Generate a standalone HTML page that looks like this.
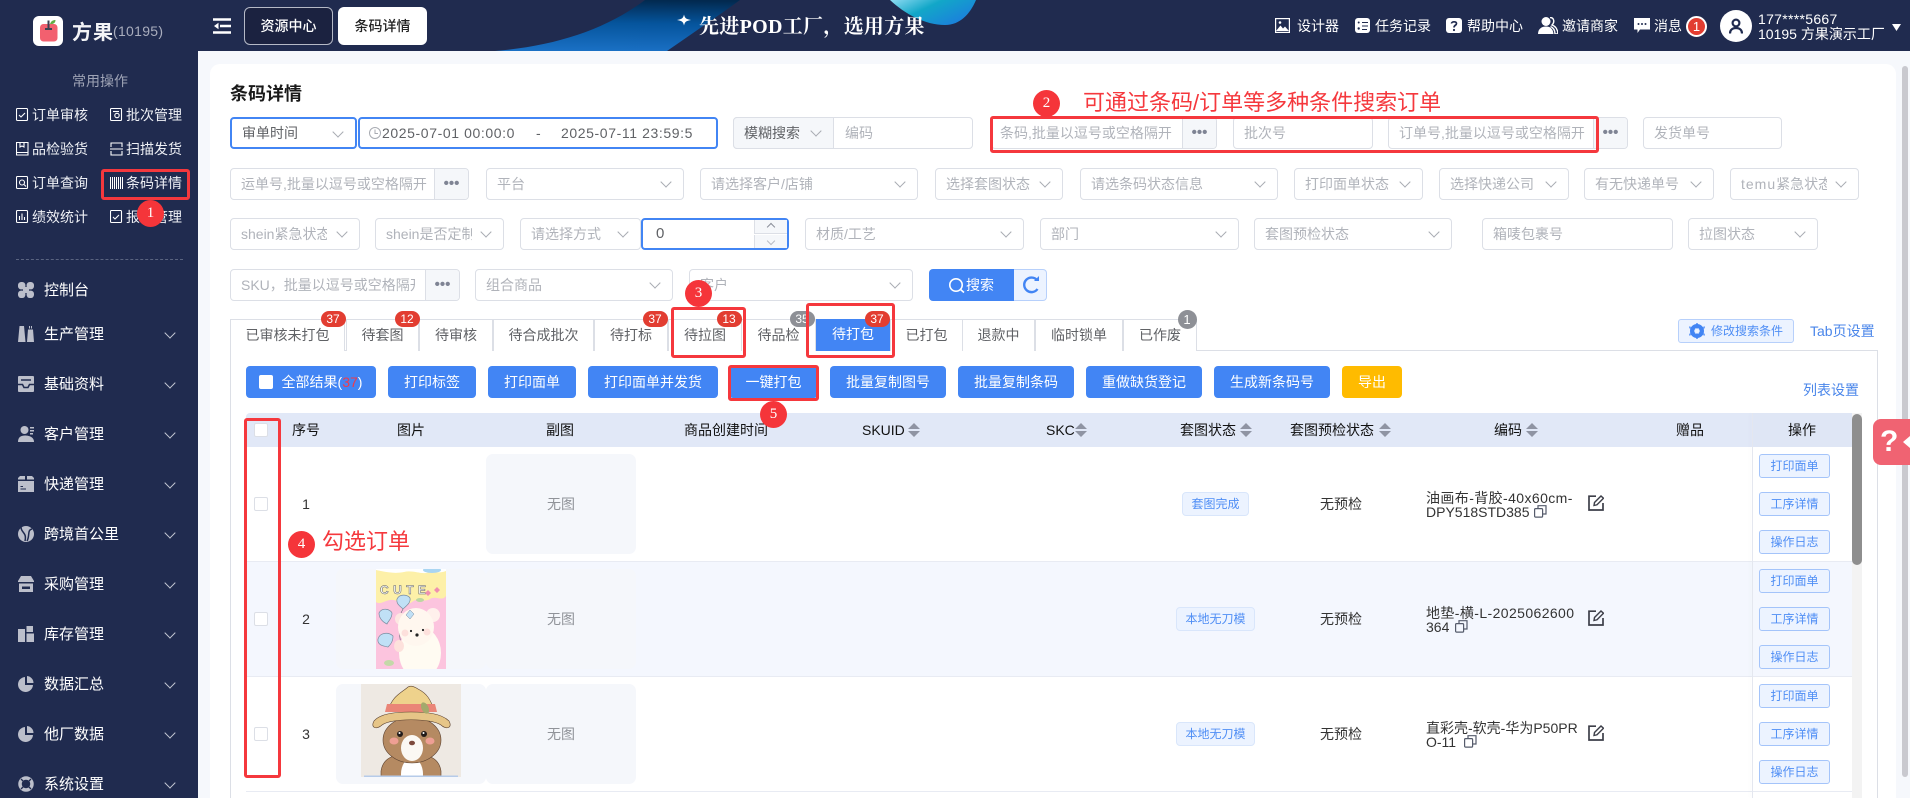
<!DOCTYPE html>
<html lang="zh"><head><meta charset="utf-8"><title>条码详情</title>
<style>
*{box-sizing:border-box}
html,body{margin:0;padding:0}
body{width:1910px;height:798px;overflow:hidden;position:relative;background:#f6f8fc;font:14px/20px "Liberation Sans","Noto Sans CJK SC",sans-serif;color:#333}
.a{position:absolute;white-space:nowrap}
.t{position:absolute;white-space:nowrap;height:20px;line-height:20px}
.c{transform:translateX(-50%)}
svg{position:absolute;display:block}
.i{position:absolute;height:32px;border:1px solid #dcdfe6;border-radius:4px;background:#fff;color:#b0b3ba;line-height:30px;padding-left:10px;white-space:nowrap;overflow:hidden}
.i.s:after{content:"";position:absolute;right:13px;top:9px;width:7px;height:7px;border-right:1px solid #a8abb2;border-bottom:1px solid #a8abb2;transform:rotate(45deg)}
.d{position:absolute;right:0;top:0;bottom:0;width:34px;background:#f5f7fa;border-left:1px solid #dcdfe6;color:#7f8494;font-size:15px;line-height:29px;text-align:center;font-weight:700;letter-spacing:0}
.tab{position:absolute;top:319px;height:32px;border:1px solid #dcdfe6;border-bottom:0;background:#fff;color:#606266;text-align:center;line-height:31px}
.b{position:absolute;top:311px;height:16px;width:25px;margin-left:-12.5px;border-radius:8px;background:#e23d31;color:#fff;font-size:12px;line-height:16px;text-align:center;z-index:3}
.btn{position:absolute;top:366px;height:32px;border-radius:4px;background:#4285f4;color:#fff;text-align:center;line-height:32px;white-space:nowrap}
.red{position:absolute;border:3px solid #f5383d;border-radius:3px;z-index:6}
.n{position:absolute;width:27px;height:27px;border-radius:50%;background:#f5353a;color:#fff;font:15px/27px "Liberation Serif","Noto Serif CJK SC",serif;text-align:center;z-index:7}
.ann{position:absolute;color:#f5383d;font-size:22px;line-height:30px;white-space:nowrap;z-index:7}
.side{position:absolute;color:#eef0f5;white-space:nowrap;height:20px;line-height:20px}
.m{position:absolute;left:44px;color:#fff;font-size:15px;height:22px;line-height:22px;white-space:nowrap}
.ch{position:absolute;left:166px;width:8px;height:8px;border-right:1.3px solid #c4c8d4;border-bottom:1.3px solid #c4c8d4;transform:rotate(45deg)}
.th{position:absolute;top:420px;height:20px;line-height:20px;color:#111;font-weight:400;white-space:nowrap}
.cb{position:absolute;left:254px;width:14px;height:14px;border:1px solid #dcdfe6;border-radius:2px;background:#fff}
.no{position:absolute;left:296px;width:20px;text-align:center;color:#333}
.cell{position:absolute;height:100px;background:#f5f7fb;border-radius:7px}
.sub{left:486px;width:150px;color:#909399;text-align:center;line-height:100px}
.tag{position:absolute;height:24px;background:#ecf3ff;border:1px solid #d9e6fb;border-radius:4px;color:#4f8ef5;font-size:12px;line-height:22px;text-align:center}
.op{position:absolute;left:1759px;width:71px;height:24px;background:#ecf3ff;border:1px solid #a4c4fa;border-radius:3px;color:#4f8ef5;font-size:12px;line-height:22px;text-align:center;z-index:2}
.code{position:absolute;left:1426px;line-height:14px;color:#333;white-space:nowrap}
.hl{stroke:#fff;stroke-width:1.1;fill:none}
</style></head><body>

<!-- header -->
<div class="a" style="left:0;top:0;width:1910px;height:51px;background:#202b4f"></div>
<svg style="left:480px;top:0" width="520" height="51" viewBox="0 0 520 51">
<defs>
<linearGradient id="g1" x1="0.55" y1="0" x2="0.5" y2="1"><stop offset="0" stop-color="#02294f"/><stop offset=".45" stop-color="#05549c"/><stop offset="1" stop-color="#1a70c4"/></linearGradient>
<linearGradient id="g2" x1="0" y1="0" x2="1" y2="0.6"><stop offset="0" stop-color="#8fdcf2"/><stop offset=".45" stop-color="#12a7c8"/><stop offset="1" stop-color="#1b80dc"/></linearGradient>
</defs>
<path d="M15 51C75 46 125 30 165 0L260 0C235 18 210 35 187 51Z" fill="url(#g1)"/>
<path d="M410 0C425 14 445 25 465 25C480 25 490 14 496 0Z" fill="url(#g2)"/>
<path d="M204 14.500C205 18.500 206 19 211 20C206 21 205 21.500 204 25.500C203 21.500 202 21 197 20C202 19 203 18.500 204 14.500Z" fill="#fff"/>
</svg>
<div class="t" style="left:699px;top:15px;height:24px;font:700 20px/24px 'Liberation Serif','Noto Serif CJK SC',serif;color:#fff;letter-spacing:.3px">先进POD工厂，选用方果</div>

<!-- main card -->
<div class="a" style="left:210px;top:64px;width:1686px;height:734px;background:#fff;border-radius:10px 10px 0 0"></div>
<div class="a" style="left:1902px;top:66px;width:6px;height:711px;background:#c9c9cf;border-radius:3px"></div>

<!-- sidebar -->
<div class="a" style="left:0;top:0;width:198px;height:798px;background:#202b4f"></div>
<div class="a" style="left:33px;top:16px;width:30px;height:30px;background:#fff;border-radius:6px"></div>
<svg style="left:33px;top:16px" width="30" height="30" viewBox="0 0 30 30">
<rect x="7" y="8" width="17.500" height="17.500" rx="3.500" fill="#f2606f"/>
<path d="M15.500 4.500V13M12 13h7" stroke="#3d4152" stroke-width="2" fill="none"/>
<path d="M17 8C18 5 20 4 22.500 4C22.500 7 20 8.500 17 8Z" fill="#63ad45"/>
</svg>
<div class="t" style="left:72px;top:20px;height:26px;line-height:26px;font-size:20px;font-weight:700;color:#f3f4f7;letter-spacing:1px">方果</div>
<div class="t" style="left:113px;top:21px;color:#a9adbd;font-size:14px;letter-spacing:.3px">(10195)</div>
<svg style="left:213px;top:18px" width="18" height="16" viewBox="0 0 18 16"><path d="M0 1.500H18M7 8H18M0 14.500H18" stroke="#fff" stroke-width="2.500"/><path d="M1 8L5.500 4.800V11.200Z" fill="#fff"/></svg>
<div class="a" style="left:244px;top:7px;width:89px;height:38px;background:#1b2240;border:1px solid #b5b9c6;border-radius:6px;color:#fff;text-align:center;line-height:36px;font-weight:500">资源中心</div>
<div class="a" style="left:338px;top:7px;width:89px;height:38px;background:#fff;border-radius:6px;color:#222;text-align:center;line-height:38px;font-weight:500">条码详情</div>

<div class="t c" style="left:100px;top:71px;color:#9ea3b5">常用操作</div>

<svg style="left:16px;top:108px" width="13" height="14" viewBox="0 0 13 14"><rect x=".5" y=".5" width="11" height="12" rx="1" class="hl"/><path d="M3 7l2 2 4-4" class="hl"/></svg>
<div class="side" style="left:32px;top:105px">订单审核</div>
<svg style="left:110px;top:108px" width="13" height="14" viewBox="0 0 13 14"><rect x=".5" y=".5" width="11" height="12" rx="1" class="hl"/><circle cx="7" cy="7.500" r="2.200" class="hl"/><path d="M3 3.500h6" class="hl"/></svg>
<div class="side" style="left:126px;top:105px">批次管理</div>
<svg style="left:16px;top:142px" width="13" height="14" viewBox="0 0 13 14"><path d="M.5.500H12V13H.5ZM4 .5V5L6 4 8 5V.5M.5 10.500H12" class="hl"/></svg>
<div class="side" style="left:32px;top:139px">品检验货</div>
<svg style="left:110px;top:142px" width="13" height="14" viewBox="0 0 13 14"><path d="M1 5V1H12V5M1 9V13H12V9M0 7H13" class="hl"/></svg>
<div class="side" style="left:126px;top:139px">扫描发货</div>
<svg style="left:16px;top:176px" width="13" height="14" viewBox="0 0 13 14"><rect x=".5" y=".5" width="11" height="12" rx="1" class="hl"/><circle cx="6" cy="6.500" r="2.500" class="hl"/><path d="M8 8.500l2 2" class="hl"/></svg>
<div class="side" style="left:32px;top:173px">订单查询</div>
<svg style="left:110px;top:176px" width="13" height="14" viewBox="0 0 13 14"><path d="M.5 1V13M2.500 1V13M4.500 1V13M6.500 1V13M8.500 1V13M10.500 1V13M12.500 1V13" stroke="#fff" stroke-width="1"/></svg>
<div class="side" style="left:126px;top:173px">条码详情</div>
<svg style="left:16px;top:210px" width="13" height="14" viewBox="0 0 13 14"><rect x=".5" y=".5" width="11" height="12" rx="1" class="hl"/><path d="M3.500 10V6M6 10V3.500M8.500 10V7" class="hl"/></svg>
<div class="side" style="left:32px;top:207px">绩效统计</div>
<svg style="left:110px;top:210px" width="13" height="14" viewBox="0 0 13 14"><rect x=".5" y=".5" width="11" height="12" rx="1" class="hl"/><path d="M3 7l2 2 4-4" class="hl"/></svg>
<div class="side" style="left:126px;top:207px">报表管理</div>
<div class="red" style="left:101px;top:169px;width:89px;height:31px"></div>
<div class="n" style="left:137px;top:200px">1</div>
<div class="a" style="left:16px;top:259px;width:167px;border-top:1px dashed #5a6480"></div>

<!-- side menu -->
<svg style="left:18px;top:282px" width="16" height="16" viewBox="0 0 16 16" fill="#bcbfcb"><rect width="7.400" height="7.400" rx="3.200"/><rect x="8.600" width="7.400" height="7.400" rx="3.200"/><rect y="8.600" width="7.400" height="7.400" rx="3.200"/><rect x="8.600" y="8.600" width="7.400" height="7.400" rx="3.200"/><rect x="5" y="5" width="6" height="6"/></svg>
<div class="m" style="top:280px">控制台</div>
<svg style="left:18px;top:326px" width="16" height="16" viewBox="0 0 16 16" fill="#bcbfcb"><path d="M1.500 0H6L7.500 16H0Z"/><path d="M10 3.500H15L16 16H9Z"/><path d="M11 0h1v2.500h-1zM13 0h1v2.500h-1z"/></svg>
<div class="m" style="top:324px">生产管理</div>
<div class="ch" style="top:329px"></div>
<svg style="left:18px;top:376px" width="16" height="16" viewBox="0 0 16 16"><rect width="16" height="16" rx="1" fill="#bcbfcb"/><path d="M3 4H13M0 8.500H4.500L6 11.500H10L11.500 8.500H16" stroke="#202b4f" stroke-width="1.500" fill="none"/></svg>
<div class="m" style="top:374px">基础资料</div>
<div class="ch" style="top:379px"></div>
<svg style="left:18px;top:426px" width="16" height="16" viewBox="0 0 16 16" fill="#bcbfcb"><circle cx="6.500" cy="4" r="4"/><path d="M0 16C0 11 3 9.500 7 9.500S16 11 16 16Z"/><path d="M12 1h4v1.500h-4zM12 4h4v1.500h-4zM12 7h3v1.500h-3z"/></svg>
<div class="m" style="top:424px">客户管理</div>
<div class="ch" style="top:429px"></div>
<svg style="left:18px;top:476px" width="16" height="16" viewBox="0 0 16 16" fill="#bcbfcb"><path d="M2 0H7V3.500H0V2ZM9 0H14L16 2V3.500H9Z"/><rect y="5" width="16" height="11"/><path d="M2.500 10.500H5M2.500 13H8" stroke="#202b4f" stroke-width="1.100"/></svg>
<div class="m" style="top:474px">快递管理</div>
<div class="ch" style="top:479px"></div>
<svg style="left:18px;top:526px" width="16" height="16" viewBox="0 0 16 16"><circle cx="8" cy="8" r="8" fill="#bcbfcb"/><path d="M3 1C3 7 9 6 7 15M14 3C9 4 12 10 9 15" stroke="#202b4f" stroke-width="1.500" fill="none"/></svg>
<div class="m" style="top:524px">跨境首公里</div>
<div class="ch" style="top:529px"></div>
<svg style="left:18px;top:576px" width="16" height="16" viewBox="0 0 16 16" fill="#bcbfcb"><path d="M3 0H13L16 5V6H0V5Z"/><path d="M1 7.500H15V16H1ZM4 10.500V13H12V10.500Z" fill-rule="evenodd"/></svg>
<div class="m" style="top:574px">采购管理</div>
<div class="ch" style="top:579px"></div>
<svg style="left:18px;top:626px" width="16" height="16" viewBox="0 0 16 16" fill="#bcbfcb"><rect y="3" width="7" height="13"/><rect x="8.500" width="6.500" height="6"/><rect x="8.500" y="7.500" width="7.500" height="8.500"/></svg>
<div class="m" style="top:624px">库存管理</div>
<div class="ch" style="top:629px"></div>
<svg style="left:18px;top:676px" width="16" height="16" viewBox="0 0 16 16" fill="#bcbfcb"><path d="M7 1V9H15A7.500 7.500 0 1 1 7 1Z"/><path d="M9 0A7 7 0 0 1 15.500 7H9Z"/></svg>
<div class="m" style="top:674px">数据汇总</div>
<div class="ch" style="top:679px"></div>
<svg style="left:18px;top:726px" width="16" height="16" viewBox="0 0 16 16" fill="#bcbfcb"><path d="M7 1V9H15A7.500 7.500 0 1 1 7 1Z"/><path d="M9 0A7 7 0 0 1 15.500 7H9Z"/></svg>
<div class="m" style="top:724px">他厂数据</div>
<div class="ch" style="top:729px"></div>
<svg style="left:18px;top:776px" width="16" height="16" viewBox="0 0 16 16"><circle cx="8" cy="8" r="6" fill="none" stroke="#bcbfcb" stroke-width="3.500"/><path d="M3 3l2.500 2.500M13 3l-2.500 2.500M3 13l2.500-2.500M13 13l-2.500-2.500" stroke="#202b4f" stroke-width="1.300"/></svg>
<div class="m" style="top:774px">系统设置</div>
<div class="ch" style="top:779px"></div>

<!-- header right -->
<svg style="left:1275px;top:18px" width="15" height="15" viewBox="0 0 15 15"><rect x=".6" y=".6" width="13.800" height="13.800" fill="#202b4f" stroke="#fff" stroke-width="1.200"/><path d="M1 13L5.500 7.500 8 10.500 10 8.500 14 13Z" fill="#fff"/><circle cx="5" cy="4.500" r="1.300" fill="#fff"/></svg>
<div class="t" style="left:1297px;top:16px;color:#fff">设计器</div>
<svg style="left:1355px;top:18px" width="15" height="15" viewBox="0 0 15 15"><rect width="15" height="15" rx="3" fill="#fff"/><path d="M7 4.500H13M7 8H13M7 11.500H12" stroke="#202b4f" stroke-width="1.100"/><circle cx="3.700" cy="4.500" r="1" fill="#202b4f"/><circle cx="3.700" cy="10.500" r="1.200" fill="#202b4f"/></svg>
<div class="t" style="left:1375px;top:16px;color:#fff">任务记录</div>
<svg style="left:1446px;top:18px" width="16" height="15" viewBox="0 0 16 15"><rect width="16" height="15" rx="3" fill="#fff"/><path d="M5.500 5.500C5.500 3.500 10.500 3 10.500 5.500C10.500 7.500 8 7 8 9.500" stroke="#202b4f" stroke-width="1.700" fill="none"/><circle cx="8" cy="12" r="1.100" fill="#202b4f"/></svg>
<div class="t" style="left:1467px;top:16px;color:#fff">帮助中心</div>
<svg style="left:1538px;top:17px" width="20" height="17" viewBox="0 0 20 17" fill="#fff"><circle cx="8" cy="4.500" r="4.500"/><path d="M0 17C0 11.500 4 9.500 8 9.500S15 11.500 15.500 17Z"/><path d="M12 .5C16 .5 17 5 14 8C17.500 9 19.500 12 20 17H17C17 13 15 10.500 12.500 9.500" fill="none" stroke="#fff" stroke-width="1.400"/></svg>
<div class="t" style="left:1562px;top:16px;color:#fff">邀请商家</div>
<svg style="left:1634px;top:18px" width="16" height="16" viewBox="0 0 16 16"><path d="M0 0H16V11.500H6L3.500 15V11.500H0Z" fill="#fff"/><circle cx="4.500" cy="6" r="1" fill="#202b4f"/><circle cx="8" cy="6" r="1" fill="#202b4f"/><circle cx="11.500" cy="6" r="1" fill="#202b4f"/></svg>
<div class="t" style="left:1654px;top:16px;color:#fff">消息</div>
<div class="a" style="left:1686px;top:16px;width:21px;height:21px;border-radius:50%;background:#e23d31;border:2px solid #fff;color:#fff;font-size:13px;line-height:17px;text-align:center">1</div>
<div class="a" style="left:1720px;top:10px;width:32px;height:32px;border-radius:50%;background:#fff"></div>
<svg style="left:1729px;top:18px" width="14" height="16" viewBox="0 0 14 16"><circle cx="7" cy="5" r="3.400" fill="none" stroke="#202b4f" stroke-width="2.200"/><path d="M1 15.500C1 11.500 4 10 7 10S13 11.500 13 15.500" fill="none" stroke="#202b4f" stroke-width="2.200"/></svg>
<div class="t" style="left:1758px;top:9px;color:#fff;letter-spacing:.3px">177****5667</div>
<div class="t" style="left:1758px;top:24px;color:#fff">10195 方果演示工厂</div>
<svg style="left:1892px;top:24px" width="9" height="7" viewBox="0 0 9 7"><path d="M0 0H9L4.500 7Z" fill="#fff"/></svg>

<!-- title -->
<div class="t" style="left:230px;top:82px;height:24px;line-height:24px;font-size:18px;font-weight:700;color:#1a1a1a">条码详情</div>

<!-- row 1 -->
<div class="i s" style="left:230px;top:117px;width:127px;border:2px solid #4285f4;color:#606266;line-height:28px">审单时间</div>
<div class="a" style="left:358px;top:117px;width:360px;height:32px;border:2px solid #4285f4;border-radius:4px;background:#fff"></div>
<svg style="left:369px;top:127px" width="12" height="12" viewBox="0 0 12 12"><circle cx="6" cy="6" r="5.500" fill="none" stroke="#a8abb2"/><path d="M6 2.500V6.500H9" fill="none" stroke="#a8abb2"/></svg>
<div class="t" style="left:382px;top:123px;width:133px;overflow:hidden;color:#606266;letter-spacing:.6px">2025-07-01 00:00:00</div>
<div class="t" style="left:536px;top:123px;color:#606266">-</div>
<div class="t" style="left:561px;top:123px;width:132px;overflow:hidden;color:#606266;letter-spacing:.6px">2025-07-11 23:59:59</div>
<div class="i" style="left:733px;top:117px;width:240px;padding-left:111px">编码</div>
<div class="i s" style="left:733px;top:117px;width:101px;background:#f5f7fa;color:#606266;border-radius:4px 0 0 4px">模糊搜索</div>
<div class="i" style="left:991px;top:117px;width:226px;padding-left:8px">条码,批量以逗号或空格隔开<div class="d">•••</div></div>
<div class="i" style="left:1233px;top:117px;width:140px">批次号</div>
<div class="i" style="left:1388px;top:117px;width:240px">订单号,批量以逗号或空格隔开<div class="d">•••</div></div>
<div class="i" style="left:1643px;top:117px;width:139px">发货单号</div>

<!-- row 2 -->
<div class="i" style="left:230px;top:168px;width:239px">运单号,批量以逗号或空格隔开<div class="d">•••</div></div>
<div class="i s" style="left:486px;top:168px;width:198px">平台</div>
<div class="i s" style="left:700px;top:168px;width:218px">请选择客户/店铺</div>
<div class="i s" style="left:935px;top:168px;width:128px">选择套图状态</div>
<div class="i s" style="left:1080px;top:168px;width:198px">请选条码状态信息</div>
<div class="i s" style="left:1294px;top:168px;width:129px">打印面单状态</div>
<div class="i s" style="left:1439px;top:168px;width:130px">选择快递公司</div>
<div class="i s" style="left:1584px;top:168px;width:130px">有无快递单号</div>
<div class="i s" style="left:1730px;top:168px;width:129px"><span style="display:inline-block;width:86px;overflow:hidden;vertical-align:top"><span style="letter-spacing:1px">temu</span>紧急状态</span></div>

<!-- row 3 -->
<div class="i s" style="left:230px;top:218px;width:130px"><span style="display:inline-block;width:86px;overflow:hidden;vertical-align:top">shein紧急状态</span></div>
<div class="i s" style="left:375px;top:218px;width:129px"><span style="display:inline-block;width:86px;overflow:hidden;vertical-align:top">shein是否定制</span></div>
<div class="i s" style="left:520px;top:218px;width:121px">请选择方式</div>
<div class="a" style="left:641px;top:218px;width:148px;height:32px;border:2px solid #4285f4;border-radius:4px;background:#fff;color:#606266;padding-left:13px;line-height:28px;font-size:15px">0</div>
<div class="a" style="left:754px;top:220px;width:33px;height:14px;background:#f5f7fa;border-left:1px solid #dcdfe6;border-bottom:1px solid #dcdfe6"></div>
<div class="a" style="left:754px;top:235px;width:33px;height:13px;background:#f5f7fa;border-left:1px solid #dcdfe6"></div>
<div class="a" style="left:768px;top:224px;width:6px;height:6px;border-left:1px solid #8a8e99;border-top:1px solid #8a8e99;transform:rotate(45deg)"></div>
<div class="a" style="left:768px;top:238px;width:6px;height:6px;border-right:1px solid #b8bbc4;border-bottom:1px solid #b8bbc4;transform:rotate(45deg)"></div>
<div class="i s" style="left:805px;top:218px;width:219px">材质/工艺</div>
<div class="i s" style="left:1040px;top:218px;width:199px">部门</div>
<div class="i s" style="left:1254px;top:218px;width:198px">套图预检状态</div>
<div class="i" style="left:1482px;top:218px;width:191px">箱唛包裹号</div>
<div class="i s" style="left:1688px;top:218px;width:130px">拉图状态</div>

<!-- row 4 -->
<div class="i" style="left:230px;top:269px;width:230px"><span style="display:inline-block;width:174px;overflow:hidden;vertical-align:top">SKU，批量以逗号或空格隔开</span><div class="d">•••</div></div>
<div class="i s" style="left:475px;top:269px;width:198px">组合商品</div>
<div class="i s" style="left:689px;top:269px;width:224px">客户</div>
<div class="a" style="left:929px;top:269px;width:85px;height:32px;background:#4285f4;border-radius:4px 0 0 4px;color:#fff;line-height:32px;padding-left:37px">搜索</div>
<svg style="left:948px;top:277px" width="18" height="18" viewBox="0 0 18 18"><circle cx="8" cy="8" r="6.200" fill="none" stroke="#fff" stroke-width="1.600"/><path d="M12 12L16 15.500" stroke="#fff" stroke-width="1.600"/></svg>
<div class="a" style="left:1014px;top:269px;width:33px;height:32px;background:#ecf3ff;border:1px solid #b7d0fb;border-left:0;border-radius:0 4px 4px 0"></div>
<svg style="left:1022px;top:276px" width="18" height="18" viewBox="0 0 18 18"><path d="M15 4A7.300 7.300 0 1 0 15.500 13" fill="none" stroke="#4285f4" stroke-width="2.400"/><path d="M12 5H17V0Z" fill="#4285f4"/></svg>

<!-- tabs -->
<div class="a" style="left:230px;top:350px;width:1647px;border-top:1px solid #dcdfe6"></div>
<div class="a" style="left:230px;top:350px;height:448px;border-left:1px solid #dcdfe6"></div>
<div class="a" style="left:1877px;top:350px;height:448px;border-left:1px solid #dcdfe6"></div>
<div class="tab" style="left:230px;width:115px">已审核未打包</div>
<div class="tab" style="left:346px;width:73px">待套图</div>
<div class="tab" style="left:419px;width:74px">待审核</div>
<div class="tab" style="left:493px;width:101px">待合成批次</div>
<div class="tab" style="left:594px;width:74px">待打标</div>
<div class="tab" style="left:668px;width:74px">待拉图</div>
<div class="tab" style="left:742px;width:74px;border-left:0">待品检</div>
<div class="tab" style="left:816px;width:74px;background:#4285f4;color:#fff;border:0">待打包</div>
<div class="tab" style="left:890px;width:73px">已打包</div>
<div class="tab" style="left:962px;width:73px">退款中</div>
<div class="tab" style="left:1035px;width:88px">临时锁单</div>
<div class="tab" style="left:1123px;width:74px">已作废</div>
<div class="b" style="left:333px">37</div>
<div class="b" style="left:407px">12</div>
<div class="b" style="left:655px">37</div>
<div class="b" style="left:729px">13</div>
<div class="b" style="left:802px;background:#8e9096">35</div>
<div class="b" style="left:877px">37</div>
<div class="b" style="left:1187px;width:19px;height:19px;margin-left:-9.500px;top:310px;line-height:19px;background:#8e9096;border-radius:50%;font-size:13px">1</div>

<div class="a" style="left:1678px;top:319px;width:116px;height:24px;background:#ecf3ff;border:1px solid #b7d0fb;border-radius:3px;color:#4f8ef5;font-size:12px;line-height:22px;padding-left:32px">修改搜索条件</div>
<svg style="left:1689px;top:323px" width="16" height="16" viewBox="0 0 16 16"><circle cx="8" cy="8" r="5" fill="none" stroke="#4285f4" stroke-width="4"/><path d="M8 0V16M0 4L16 12M0 12L16 4" stroke="#4285f4" stroke-width="2" opacity=".7"/><circle cx="8" cy="8" r="2.500" fill="#ecf3ff"/></svg>
<div class="t" style="left:1810px;top:321px;color:#4a86ea">Tab页设置</div>
<div class="t" style="left:1803px;top:380px;color:#4a86ea">列表设置</div>

<!-- toolbar -->
<div class="btn" style="left:246px;width:130px;padding-left:22px">全部结果(<span style="color:#f0394a">37</span>)</div>
<div class="a" style="left:259px;top:375px;width:14px;height:14px;background:#fff;border-radius:2px"></div>
<div class="btn" style="left:388px;width:88px">打印标签</div>
<div class="btn" style="left:488px;width:88px">打印面单</div>
<div class="btn" style="left:588px;width:130px">打印面单并发货</div>
<div class="btn" style="left:729px;width:89px">一键打包</div>
<div class="btn" style="left:830px;width:116px">批量复制图号</div>
<div class="btn" style="left:958px;width:116px">批量复制条码</div>
<div class="btn" style="left:1086px;width:116px">重做缺货登记</div>
<div class="btn" style="left:1214px;width:116px">生成新条码号</div>
<div class="btn" style="left:1342px;width:60px;background:#ffbb00">导出</div>

<!-- table -->
<div class="a" style="left:246px;top:413px;width:1606px;height:34px;background:#e1e8f7;border-radius:4px 0 0 0"></div>
<div class="a" style="left:246px;top:561px;width:1606px;height:115px;background:#f4f7fe"></div>
<div class="a" style="left:246px;top:561px;width:1606px;border-top:1px solid #e8ebf3"></div>
<div class="a" style="left:246px;top:676px;width:1606px;border-top:1px solid #e8ebf3"></div>
<div class="a" style="left:246px;top:791px;width:1606px;border-top:1px solid #e8ebf3"></div>
<div class="a" style="left:1752px;top:413px;width:1px;height:385px;background:#e4e7ef;box-shadow:-2px 0 3px rgba(0,0,0,.04)"></div>
<div class="a" style="left:1753px;top:413px;width:99px;height:34px;background:#dfe6f5"></div>
<div class="a" style="left:1852px;top:413px;width:10px;height:385px;background:#f3f3f3"></div>
<div class="a" style="left:1852px;top:414px;width:10px;height:151px;background:#8e8e8e;border-radius:5px"></div>

<div class="cb" style="top:423px"></div>
<div class="th" style="left:292px">序号</div>
<div class="th" style="left:397px">图片</div>
<div class="th" style="left:546px">副图</div>
<div class="th" style="left:684px">商品创建时间</div>
<div class="th" style="left:862px">SKUID</div>
<svg style="left:908px;top:423px" width="12" height="14" viewBox="0 0 12 14"><path d="M6 0L12 6H0ZM6 14L0 8H12Z" fill="#8f94a3"/></svg>
<div class="th" style="left:1046px">SKC</div>
<svg style="left:1075px;top:423px" width="12" height="14" viewBox="0 0 12 14"><path d="M6 0L12 6H0ZM6 14L0 8H12Z" fill="#8f94a3"/></svg>
<div class="th" style="left:1180px">套图状态</div>
<svg style="left:1240px;top:423px" width="12" height="14" viewBox="0 0 12 14"><path d="M6 0L12 6H0ZM6 14L0 8H12Z" fill="#8f94a3"/></svg>
<div class="th" style="left:1290px">套图预检状态</div>
<svg style="left:1379px;top:423px" width="12" height="14" viewBox="0 0 12 14"><path d="M6 0L12 6H0ZM6 14L0 8H12Z" fill="#8f94a3"/></svg>
<div class="th" style="left:1494px">编码</div>
<svg style="left:1526px;top:423px" width="12" height="14" viewBox="0 0 12 14"><path d="M6 0L12 6H0ZM6 14L0 8H12Z" fill="#8f94a3"/></svg>
<div class="th" style="left:1676px">赠品</div>
<div class="th" style="left:1788px">操作</div>

<!-- rows -->
<div class="cb" style="top:497px"></div>
<div class="cb" style="top:612px"></div>
<div class="cb" style="top:727px"></div>
<div class="no" style="top:494px">1</div>
<div class="no" style="top:609px">2</div>
<div class="no" style="top:724px">3</div>

<div class="cell sub" style="top:454px">无图</div>
<div class="cell sub" style="top:569px">无图</div>
<div class="cell sub" style="top:684px">无图</div>
<div class="cell" style="left:336px;top:569px;width:150px"></div>
<div class="cell" style="left:336px;top:684px;width:150px"></div>

<!-- cute bear -->
<svg style="left:376px;top:569px" width="70" height="100" viewBox="0 0 70 100">
<rect width="70" height="100" fill="#fcc4de"/>
<path d="M0 0H70V27C66 33 60 26 54 30C48 34 42 28 36 33C30 38 22 30 14 31C8 32 4 36 0 33Z" fill="#fdf0a8"/>
<path d="M0 0H70V2C62 5 58 2 50 4C44 5 36 1 28 3C18 5 10 3 0 1Z" fill="#fff"/>
<ellipse cx="56" cy="1" rx="9" ry="3" fill="#a9d5f2"/>
<text x="4" y="25" font-size="12" font-weight="700" fill="#f7f7f2" stroke="#5b5e69" stroke-width=".5" font-family="Liberation Sans,sans-serif" textLength="46">CUTE</text>
<path d="M52 21l3 3-3 3-3-3zM61 18l3 3-3 3-3-3z" fill="#ef8fb0"/>
<path d="M21 30C24 24 32 26 34 29C35 34 30 37 27 40C24 37 20 35 21 30Z" fill="#c0e0f6" stroke="#7a8ca0" stroke-width=".7"/>
<path d="M3 44C6 38 14 40 16 44C16 50 12 52 11 55C7 53 3 50 3 44Z" fill="#c0e0f6" stroke="#7a8ca0" stroke-width=".7"/>
<path d="M2 70C4 63 13 63 17 67C17 73 14 76 12 78C7 77 1 76 2 70Z" fill="#c0e0f6" stroke="#7a8ca0" stroke-width=".7"/>
<path d="M27 40C22 48 22 60 25 75" fill="none" stroke="#667" stroke-width=".6"/>
<ellipse cx="44" cy="84" rx="21" ry="26" fill="#fffbf2"/>
<ellipse cx="23" cy="77" rx="5" ry="6" fill="#fde1dc"/>
<circle cx="57" cy="46" r="7" fill="#fff0ec"/>
<circle cx="25" cy="50" r="6" fill="#fde7e2"/>
<ellipse cx="40" cy="58" rx="18" ry="19" fill="#fff7ef"/>
<circle cx="29" cy="64" r="3.500" fill="#fde0dc"/><circle cx="51" cy="63" r="3.500" fill="#fde0dc"/>
<circle cx="35" cy="62" r="1.100" fill="#222"/><circle cx="47" cy="61" r="1.100" fill="#222"/><circle cx="41" cy="66" r="1.600" fill="#222"/>
<path d="M30 46l4-5 4 4-4 5z" fill="#c0e0f6" stroke="#7a8ca0" stroke-width=".5"/>
<ellipse cx="13" cy="94" rx="5" ry="3" fill="#c4d8a8"/>
<ellipse cx="44" cy="31" rx="4" ry="2" fill="#bcd6a2"/>
</svg>

<!-- hat bear -->
<svg style="left:361px;top:684px" width="100" height="93" viewBox="0 0 100 93">
<rect width="100" height="93" fill="#eee9e3"/>
<path d="M20 87C22 74 32 70 50 70S78 74 80 87V93H20Z" fill="#b58a62" stroke="#5c4230" stroke-width=".6"/>
<ellipse cx="51" cy="90" rx="11" ry="16" fill="#fff"/>
<ellipse cx="51" cy="56" rx="29" ry="23" fill="#b58a62" stroke="#5c4230" stroke-width=".6"/>
<path d="M27 27C31 12 40 9 47 3C50 1 54 3 57 5C65 9 70 15 73 27Z" fill="#eed28c" stroke="#5c4230" stroke-width=".6"/>
<path d="M26 20H74L76 28H24Z" fill="#ea8577"/>
<path d="M13 37C20 29 36 28 50 28S80 29 88 37C92 44 85 46 80 41C70 34 30 34 21 41C16 46 9 44 13 37Z" fill="#e6c587" stroke="#5c4230" stroke-width=".6"/>
<ellipse cx="64" cy="24" rx="3.500" ry="6" fill="#a4a96c" transform="rotate(-25 64 24)"/>
<ellipse cx="51" cy="64" rx="11" ry="13" fill="#fbf8f3"/>
<circle cx="39" cy="50" r="3" fill="#211a18"/><circle cx="63" cy="50" r="3" fill="#211a18"/>
<circle cx="38.500" cy="49" r="1" fill="#fff"/><circle cx="62.500" cy="49" r="1" fill="#fff"/>
<ellipse cx="33" cy="57" rx="4.500" ry="3.500" fill="#ee9f94"/><ellipse cx="69" cy="57" rx="4.500" ry="3.500" fill="#ee9f94"/>
<ellipse cx="51" cy="59" rx="3" ry="2.300" fill="#7d4a3c"/>
<rect x="3" y="91.500" width="94" height="1.500" fill="#b6cbe9"/>
</svg>

<div class="tag" style="left:1182px;top:492px;width:67px">套图完成</div>
<div class="tag" style="left:1176px;top:607px;width:79px">本地无刀模</div>
<div class="tag" style="left:1176px;top:722px;width:79px">本地无刀模</div>
<div class="t" style="left:1320px;top:494px">无预检</div>
<div class="t" style="left:1320px;top:609px">无预检</div>
<div class="t" style="left:1320px;top:724px">无预检</div>

<div class="code" style="top:491px"><span style="letter-spacing:.4px">油画布-背胶-40x60cm-</span><br>DPY518STD385</div>
<div class="code" style="top:606px"><span style="letter-spacing:.4px">地垫-横-L-2025062600</span><br>364</div>
<div class="code" style="top:721px">直彩壳-软壳-华为P50PR<br>O-11</div>
<svg style="left:1534px;top:505px" width="13" height="13" viewBox="0 0 13 13"><rect x=".6" y="3.600" width="8" height="8.500" rx="1" fill="none" stroke="#555b6b" stroke-width="1.200"/><path d="M4 3V.7H12V9H9" fill="none" stroke="#555b6b" stroke-width="1.200"/></svg>
<svg style="left:1455px;top:620px" width="13" height="13" viewBox="0 0 13 13"><rect x=".6" y="3.600" width="8" height="8.500" rx="1" fill="none" stroke="#555b6b" stroke-width="1.200"/><path d="M4 3V.7H12V9H9" fill="none" stroke="#555b6b" stroke-width="1.200"/></svg>
<svg style="left:1464px;top:735px" width="13" height="13" viewBox="0 0 13 13"><rect x=".6" y="3.600" width="8" height="8.500" rx="1" fill="none" stroke="#555b6b" stroke-width="1.200"/><path d="M4 3V.7H12V9H9" fill="none" stroke="#555b6b" stroke-width="1.200"/></svg>
<svg style="left:1588px;top:495px" width="16" height="16" viewBox="0 0 16 16"><path d="M8 1.200H1V15H15V8" fill="none" stroke="#3d3f49" stroke-width="1.700"/><path d="M6 10.500L6.500 7.500 13 1 15.500 3.300 9 9.800Z" fill="none" stroke="#3d3f49" stroke-width="1.400"/></svg>
<svg style="left:1588px;top:610px" width="16" height="16" viewBox="0 0 16 16"><path d="M8 1.200H1V15H15V8" fill="none" stroke="#3d3f49" stroke-width="1.700"/><path d="M6 10.500L6.500 7.500 13 1 15.500 3.300 9 9.800Z" fill="none" stroke="#3d3f49" stroke-width="1.400"/></svg>
<svg style="left:1588px;top:725px" width="16" height="16" viewBox="0 0 16 16"><path d="M8 1.200H1V15H15V8" fill="none" stroke="#3d3f49" stroke-width="1.700"/><path d="M6 10.500L6.500 7.500 13 1 15.500 3.300 9 9.800Z" fill="none" stroke="#3d3f49" stroke-width="1.400"/></svg>

<div class="op" style="top:454px">打印面单</div>
<div class="op" style="top:492px">工序详情</div>
<div class="op" style="top:530px">操作日志</div>
<div class="op" style="top:569px">打印面单</div>
<div class="op" style="top:607px">工序详情</div>
<div class="op" style="top:645px">操作日志</div>
<div class="op" style="top:684px">打印面单</div>
<div class="op" style="top:722px">工序详情</div>
<div class="op" style="top:760px">操作日志</div>

<!-- help button -->
<div class="a" style="left:1873px;top:419px;width:37px;height:46px;background:#f06372;border-radius:8px 0 0 8px;z-index:4"></div>
<div class="a" style="left:1880px;top:425px;color:#fff;font:700 30px/34px 'Liberation Sans',sans-serif;z-index:5">?</div>
<svg style="left:1903px;top:436px;z-index:5" width="7" height="12" viewBox="0 0 7 12"><path d="M7 0V12L0 6Z" fill="#fff"/></svg>

<!-- annotations -->
<div class="red" style="left:990px;top:116px;width:609px;height:37px"></div>
<div class="n" style="left:1033px;top:90px">2</div>
<div class="ann" style="left:1083px;top:88px">可通过条码/订单等多种条件搜索订单</div>
<div class="n" style="left:685px;top:280px">3</div>
<div class="red" style="left:671px;top:307px;width:75px;height:51px"></div>
<div class="red" style="left:806px;top:303px;width:89px;height:55px"></div>
<div class="red" style="left:728px;top:365px;width:91px;height:36px"></div>
<div class="n" style="left:760px;top:401px">5</div>
<div class="red" style="left:244px;top:418px;width:37px;height:360px"></div>
<div class="n" style="left:288px;top:531px">4</div>
<div class="ann" style="left:322px;top:527px">勾选订单</div>
</body></html>
